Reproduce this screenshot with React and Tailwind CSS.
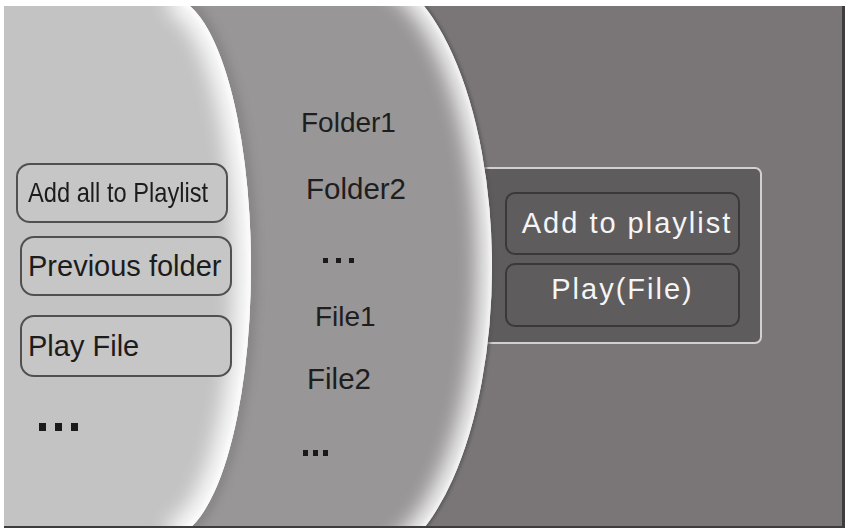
import React from "react";

const leftPath = "M0,-10 L169,-10 L169,-3 A82 270 0 0 1 169,537 L0,537 Z";
const leftArc = "M169,-3 A82 270 0 0 1 169,537";
const midPath = "M0,-40 L358,-40 L358,-33 A134 300 0 0 1 358,567 L0,567 Z";
const midArc = "M358,-33 A134 300 0 0 1 358,567";

function Backdrop() {
  return (
    <svg
      className="absolute inset-0 z-10 pointer-events-none"
      width="838"
      height="520"
      viewBox="4 6 838 520"
    >
      <defs>
        <clipPath id="midClip">
          <path d={midPath} />
        </clipPath>
        <clipPath id="leftClip">
          <path d={leftPath} />
        </clipPath>
        <filter id="b10" filterUnits="userSpaceOnUse" x="-50" y="-60" width="950" height="650">
          <feGaussianBlur stdDeviation="10" />
        </filter>
        <filter id="b6" filterUnits="userSpaceOnUse" x="-50" y="-60" width="950" height="650">
          <feGaussianBlur stdDeviation="5" />
        </filter>
        <filter id="b2" filterUnits="userSpaceOnUse" x="-50" y="-60" width="950" height="650">
          <feGaussianBlur stdDeviation="1.5" />
        </filter>
      </defs>
      <path d={midArc} stroke="#555253" strokeWidth="5" fill="none" filter="url(#b2)" opacity="0.7" />
      <path d={midPath} fill="#999697" />
      <g clipPath="url(#midClip)">
        <path d={midArc} stroke="#ffffff" strokeWidth="28" fill="none" filter="url(#b10)" opacity="0.9" />
        <path d={midArc} stroke="#f2f2f2" strokeWidth="6" fill="none" filter="url(#b2)" />
        <path d={leftArc} stroke="#5e5b5c" strokeWidth="12" fill="none" filter="url(#b6)" opacity="0.3" />
      </g>
      <path d={leftPath} fill="#c3c3c3" />
      <g clipPath="url(#leftClip)">
        <path d={leftArc} stroke="#ffffff" strokeWidth="34" fill="none" filter="url(#b10)" opacity="0.9" />
        <path d={leftArc} stroke="#fafafa" strokeWidth="8" fill="none" filter="url(#b2)" />
      </g>
    </svg>
  );
}

function LeftButton({ className, children }) {
  return (
    <div
      className={
        "w-[212px] rounded-[14px] border-2 border-[#505050] bg-[#c6c6c6] flex items-center text-[#1c1c1c] " +
        className
      }
    >
      {children}
    </div>
  );
}

function Dots({ size, gap, className }) {
  return (
    <div className={"flex " + className}>
      <div className={size + " bg-[#1a1a1a]"} />
      <div className={size + " bg-[#1a1a1a] " + gap} />
      <div className={size + " bg-[#1a1a1a] " + gap} />
    </div>
  );
}

export default function App() {
  return (
    <div className="w-[848px] h-[531px] bg-white pt-[6px] pl-[4px] font-['Liberation_Sans',Arial,sans-serif]">
      <div className="relative w-[841px] h-[522px] bg-[#7a7677] border-r-[3px] border-b-2 border-[#3e3c3d] overflow-hidden flex">
        <Backdrop />

        {/* left column */}
        <div className="relative z-20 w-[260px] shrink-0 flex flex-col pt-[157px]">
          <LeftButton className="ml-[12px] h-[60px] pl-[10px]">
            <span className="inline-block text-[28px] leading-none whitespace-nowrap origin-left scale-x-[0.845]">
              Add all to Playlist
            </span>
          </LeftButton>
          <LeftButton className="ml-[16px] mt-[13px] h-[60px] pl-[6px]">
            <span className="text-[29px] leading-none whitespace-nowrap">Previous folder</span>
          </LeftButton>
          <LeftButton className="ml-[16px] mt-[19px] h-[62px] pl-[6px]">
            <span className="text-[29px] leading-none whitespace-nowrap">Play File</span>
          </LeftButton>
          <Dots size="w-[7px] h-[8px]" gap="ml-[9px]" className="ml-[35px] mt-[46px]" />
        </div>

        {/* middle column */}
        <div className="relative z-20 w-[200px] shrink-0 flex flex-col text-[28px] leading-[28px] text-[#1e1e1e] pt-[103px]">
          <div className="ml-[37px] whitespace-nowrap">Folder1</div>
          <div className="ml-[42px] mt-[38px] whitespace-nowrap text-[29.5px]">Folder2</div>
          <Dots size="w-[5px] h-[5px]" gap="ml-[8px]" className="ml-[59px] mt-[55px]" />
          <div className="ml-[51px] mt-[40px] whitespace-nowrap">File1</div>
          <div className="ml-[43px] mt-[34px] whitespace-nowrap text-[29.5px]">File2</div>
          <Dots size="w-[5px] h-[6px]" gap="ml-[5px]" className="ml-[39px] mt-[57px]" />
        </div>

        {/* right column */}
        <div className="relative z-0 flex-1">
          <div className="mt-[161px] ml-[6px] w-[292px] h-[177px] rounded-[7px] border-2 border-[#d2d0d1] bg-[#5f5c5d] pt-[23px] pl-[33px] flex flex-col gap-[8px]">
            <div className="w-[235px] h-[63px] rounded-[10px] border-2 border-[#3a3838] bg-[#5f5c5d] flex items-center justify-center pl-[9px] text-[#f5f5f5] text-[29px] tracking-[2px] whitespace-nowrap">
              Add to playlist
            </div>
            <div className="w-[235px] h-[64px] rounded-[10px] border-2 border-[#3a3838] bg-[#5f5c5d] flex items-center justify-center pb-[10px] text-[#f5f5f5] text-[29px] tracking-[2px] whitespace-nowrap">
              Play(File)
            </div>
          </div>
        </div>
      </div>
    </div>
  );
}
